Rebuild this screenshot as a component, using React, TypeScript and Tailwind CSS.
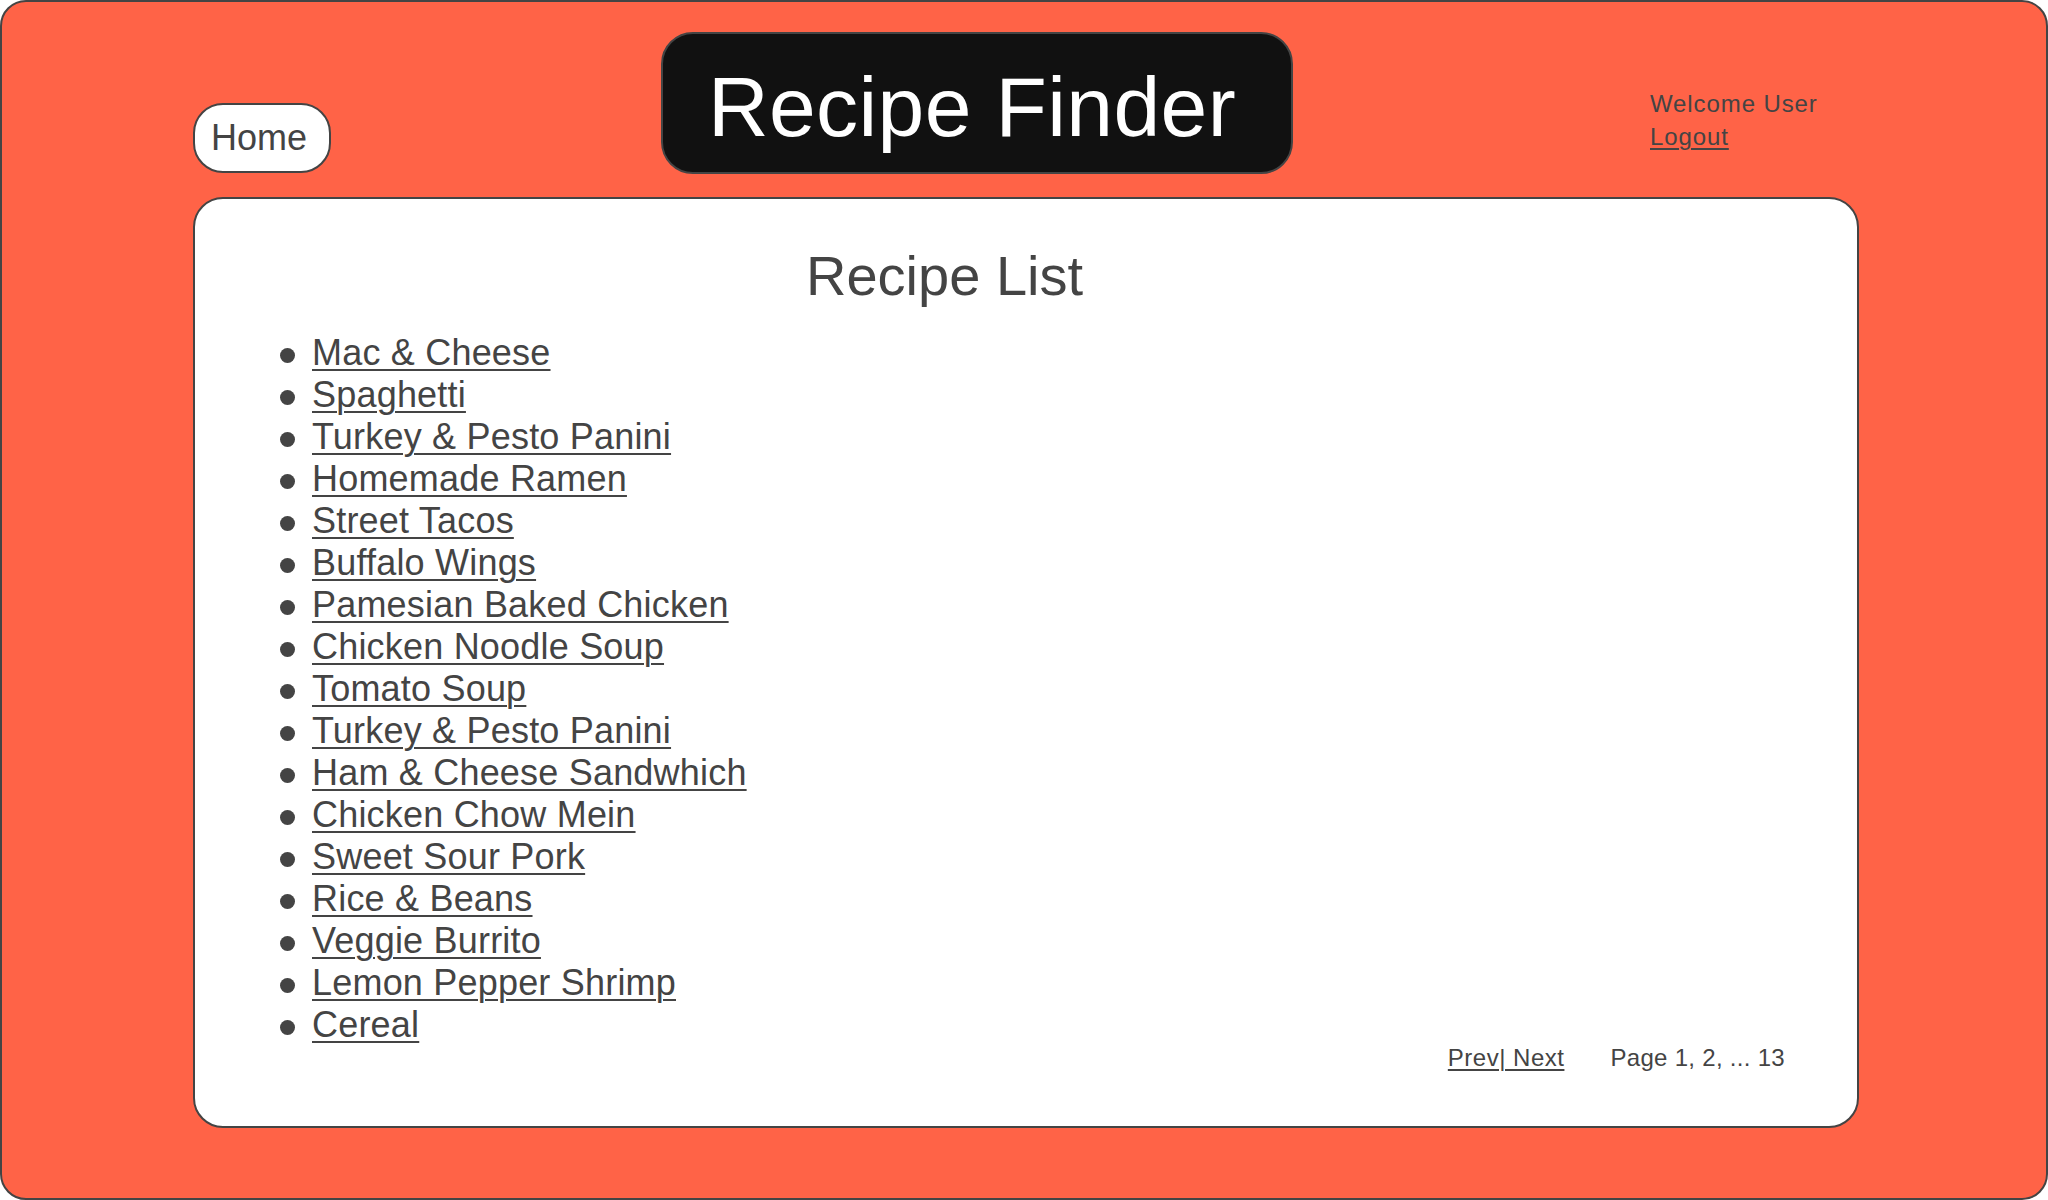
import React from "react";

const recipes = [
  "Mac & Cheese",
  "Spaghetti",
  "Turkey & Pesto Panini",
  "Homemade Ramen",
  "Street Tacos",
  "Buffalo Wings",
  "Pamesian Baked Chicken",
  "Chicken Noodle Soup",
  "Tomato Soup",
  "Turkey & Pesto Panini",
  "Ham & Cheese Sandwhich",
  "Chicken Chow Mein",
  "Sweet Sour Pork",
  "Rice & Beans",
  "Veggie Burrito",
  "Lemon Pepper Shrimp",
  "Cereal",
];

export default function App() {
  return (
    <div className="w-[2048px] h-[1200px] bg-white font-['Liberation_Sans',Arial,sans-serif] text-[#444444]">
      <div className="w-[2048px] h-[1200px] box-border border-2 border-[#444444] rounded-[26px] bg-[#FF6347] pl-[191px] pt-[30px]">
        {/* header */}
        <div className="flex items-start">
          <a
            href="#"
            className="mt-[71px] w-[138px] h-[70px] box-border border-2 border-[#444444] rounded-[30px] bg-white flex items-center justify-center pr-[6px] text-[36px] leading-none text-[#444444]"
          >
            Home
          </a>
          <div className="ml-[330px] w-[632px] h-[142px] box-border border-2 border-[#444444] rounded-[32px] bg-[#111111] flex items-center justify-center pr-[10px] pt-[7px]">
            <h1 className="text-[84px] leading-none tracking-[0.4px] text-white">Recipe Finder</h1>
          </div>
          <div className="ml-[357px] mt-[55px] text-[24px] leading-[33px] tracking-[0.9px] text-[#444444]">
            <div>Welcome User</div>
            <a href="#" className="underline underline-offset-[3px] decoration-[2px]">Logout</a>
          </div>
        </div>

        {/* card */}
        <div className="mt-[23px] w-[1666px] h-[931px] box-border border-2 border-[#444444] rounded-[30px] bg-white pt-[50px]">
          <h2 className="pl-[611px] text-[56px] leading-[54px] text-[#444444]">Recipe List</h2>
          <ul className="mt-[29px] pl-[85px] flex flex-col">
            {recipes.map((r, i) => (
              <li key={i} className="flex items-center h-[42px] gap-[17px]">
                <span className="w-[15px] h-[15px] shrink-0 rounded-full bg-[#444444] mt-[4px]" />
                <a href="#" className="text-[36px] leading-[42px] tracking-[0.2px] underline underline-offset-[4px] decoration-[2px] text-[#444444]">
                  {r}
                </a>
              </li>
            ))}
          </ul>
          <div className="flex justify-end pr-[72px] gap-[46px] text-[24px] leading-[24px] text-[#444444]">
            <a href="#" className="underline underline-offset-[3px] decoration-[2px] tracking-[0.5px]">Prev| Next</a>
            <span className="tracking-[0.3px]">Page 1, 2, ... 13</span>
          </div>
        </div>
      </div>
    </div>
  );
}
